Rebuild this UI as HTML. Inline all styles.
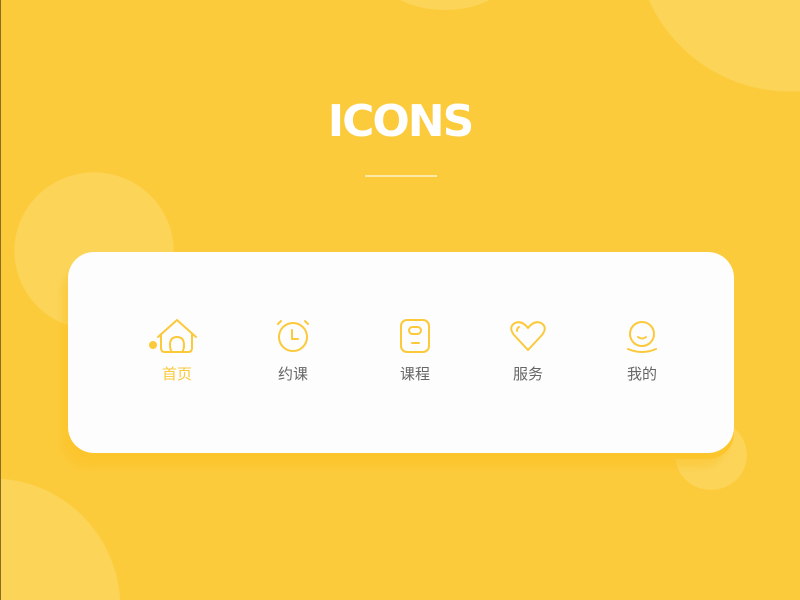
<!DOCTYPE html>
<html style="margin:0;width:800px;height:600px;overflow:hidden"><head><meta charset="utf-8"><style>
body{margin:0;width:800px;height:600px;overflow:hidden;font-family:"Liberation Sans","Noto Sans CJK SC",sans-serif}
.w{position:relative;width:800px;height:600px;overflow:hidden;background:
radial-gradient(circle at 790px -63px,#fcd458 154px,transparent 155px),
radial-gradient(ellipse 60px 30px at 445px -20px,#fcd458 99%,transparent 100%),
radial-gradient(ellipse 80px 79px at 94px 251px,#fcd458 99%,transparent 100%),
radial-gradient(ellipse 128px 130px at -7px 608px,#fcd458 99%,transparent 100%),
radial-gradient(ellipse 36px 35px at 711px 455px,#fcd458 99%,transparent 100%),
#fccb3b}
.card{position:absolute;left:68px;top:252px;width:666px;height:201px;background:#fdfdfd;border-radius:26px;box-shadow:0 6px 0 #fcc52c,-6px 14px 6px rgba(250,190,30,.35)}
.t{position:absolute;top:96px;width:800px;text-align:center;color:#fff;font:bold 44px "DejaVu Sans","Liberation Sans",sans-serif;letter-spacing:-2px}
.line{position:absolute;left:365px;top:175px;width:72px;height:2px;background:#fde9a8}
.lb{position:absolute;top:363px;width:80px;text-align:center;font-size:15px;color:#666}
svg.ic{position:absolute;left:0;top:0}
svg.ic path,svg.ic rect,svg.ic circle{fill:none;stroke:#fcc93b;stroke-width:2;stroke-linecap:round;stroke-linejoin:round}
</style></head><body><div class="w">
<div style="position:absolute;left:0;top:0;width:1px;height:600px;background:#8a6d1e"></div>
<div class="t">ICONS</div>
<div class="line"></div>
<div class="card"></div>
<svg class="ic" width="800" height="600" viewBox="0 0 800 600">
<path d="M158 337 L177 320 L196 337 M161 334 V348 Q161 352 165 352 H188 Q192 352 192 348 V334"/>
<path d="M172 352 Q170 350 170 345 Q170 337 177 337 Q184 337 184 345 Q184 350 182 352"/>
<circle cx="153" cy="345" r="4" style="fill:#fcc93b;stroke:none"/>
<circle cx="293" cy="337" r="14"/><path d="M292 330 V339 H298 M278 324 L281 321 M308 324 L305 321"/>
<rect x="401" y="320" width="28" height="32" rx="6"/><rect x="409" y="327" width="12" height="7" rx="3.5"/><path d="M412 343 H419"/>
<path d="M528 350 L514 335 Q508 327 515 323 Q522 320 528 328 Q534 320 541 323 Q548 327 542 335 Z M517 331 Q517 328 519 327"/>
<circle cx="642" cy="334" r="12"/><path d="M638 337 Q642 340 646 337 M628 349 Q642 355 656 349"/>
</svg>
<div class="lb" style="left:137px;color:#fcc93b">首页</div>
<div class="lb" style="left:253px">约课</div>
<div class="lb" style="left:375px">课程</div>
<div class="lb" style="left:488px">服务</div>
<div class="lb" style="left:602px">我的</div>
</div></body></html>
